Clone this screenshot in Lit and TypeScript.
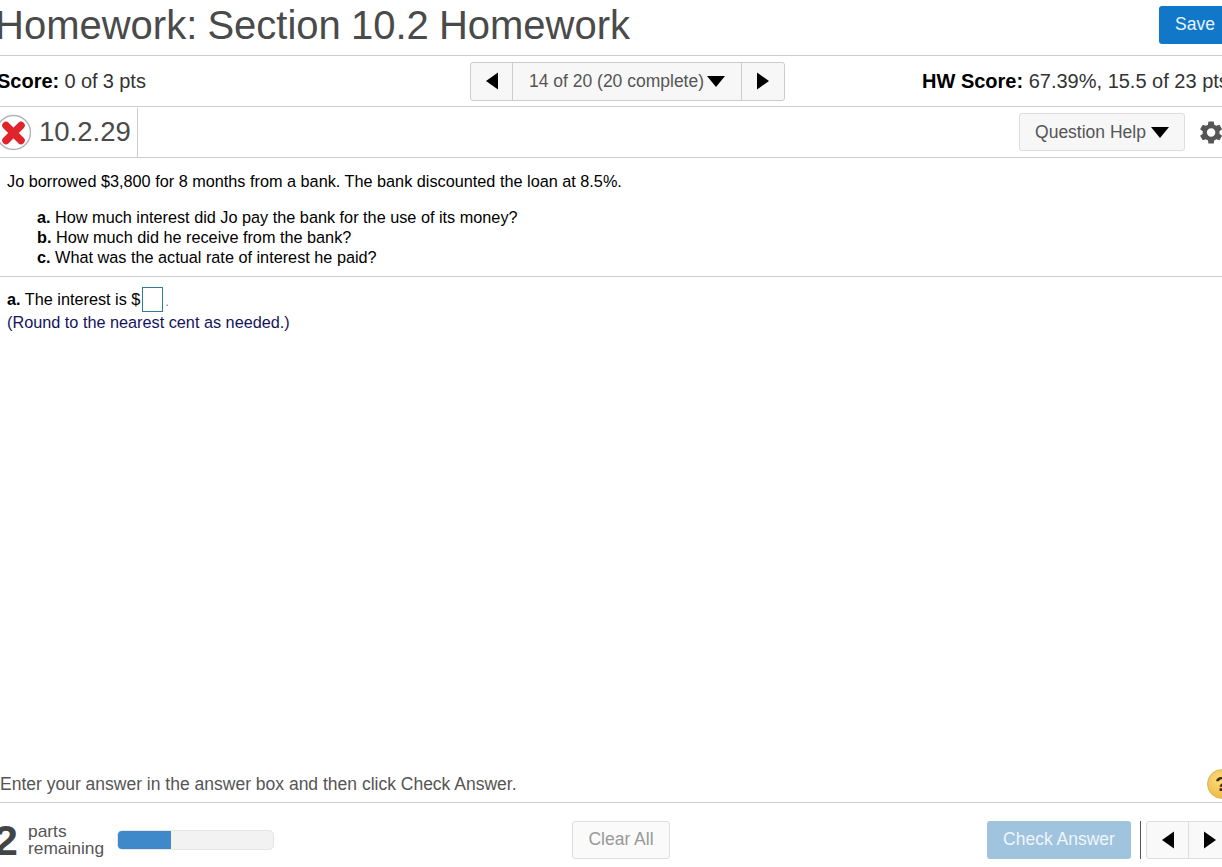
import { LitElement, html, css, svg } from "lit";
import { customElement } from "lit/decorators.js";

const left = svg`<svg width="14" height="18" viewBox="0 0 14 18"><path d="M13 .5v17L1 9z" fill="#000"/></svg>`;
const right = svg`<svg width="14" height="18" viewBox="0 0 14 18"><path d="M1 .5v17L13 9z" fill="#000"/></svg>`;
const down = svg`<svg width="18" height="11" viewBox="0 0 18 11"><path d="M0 0h18L9 11z" fill="#000"/></svg>`;

@customElement("app-root")
export class AppRoot extends LitElement {
  static styles = css`
    :host {
      display: flex;
      flex-direction: column;
      width: 1222px;
      height: 867px;
      overflow: hidden;
      background: #fff;
      font-family: "Liberation Sans", Arial, sans-serif;
      color: #000;
    }
    .title-row {
      height: 55px;
      flex: none;
      display: flex;
      justify-content: space-between;
      align-items: flex-start;
      border-bottom: 1px solid #ccc;
      box-sizing: content-box;
    }
    h1 {
      margin: 0 0 0 -5px;
      font-size: 40px;
      font-weight: 400;
      line-height: 50px;
      word-spacing: -1px;
      color: #4a4a4a;
      white-space: nowrap;
    }
    .save {
      width: 70px;
      height: 38px;
      margin: 6px -7px 0 0;
      box-sizing: border-box;
      background: #1177c8;
      border-radius: 3px;
      color: #e8f4fc;
      font-size: 17.5px;
      display: flex;
      align-items: center;
      padding: 0 0 2px 16px;
    }
    .score-row {
      height: 50px;
      flex: none;
      display: grid;
      grid-template-columns: 470px 315px 1fr;
      align-items: center;
      border-bottom: 1px solid #ccc;
      font-size: 20px;
      color: #333;
      white-space: nowrap;
    }
    .score-row b { color: #000; }
    .score { margin-left: -3px; word-spacing: -0.3px; }
    .hw { margin-left: 137px; }
    .nav {
      display: flex;
      height: 39px;
      box-sizing: border-box;
      border: 1px solid #ccc;
      border-radius: 3px;
      background: #f7f7f7;
      color: #555;
      font-size: 17.5px;
    }
    .nav > div { display: flex; align-items: center; justify-content: center; }
    .nav .arrow-l { width: 42px; border-right: 1px solid #ccc; box-sizing: border-box; }
    .nav .mid { width: 229px; gap: 3px; border-right: 1px solid #ccc; box-sizing: border-box; }
    .nav .arrow-r { flex: 1; }
    .q-row {
      height: 50px;
      flex: none;
      display: flex;
      align-items: center;
      border-bottom: 1px solid #ccc;
      box-sizing: content-box;
    }
    .q-left {
      display: flex;
      align-items: center;
      height: 49px;
      width: 137px;
      border-right: 1px solid #ccc;
      gap: 8px;
      font-size: 27.5px;
      color: #4a4a4a;
      flex: none;
    }
    .help {
      margin-left: auto;
      width: 166px;
      height: 38px;
      box-sizing: border-box;
      border: 1px solid #ddd;
      border-radius: 3px;
      background: #f7f7f7;
      color: #555;
      font-size: 17.5px;
      display: flex;
      align-items: center;
      justify-content: center;
      gap: 5px;
    }
    .gear { margin: 0 -3px 0 11px; flex: none; display: block; }
    .stem {
      padding: 13px 7px 9px;
      font-size: 16.25px;
      line-height: 20px;
      border-bottom: 1px solid #ccc;
      flex: none;
    }
    .stem p { margin: 0 0 16px; }
    .stem ul { list-style: none; margin: 0; padding: 0 0 0 30px; }
    .answer { padding: 11px 7px 0; font-size: 16.25px; line-height: 23px; flex: 1; }
    .line { display: flex; align-items: center; height: 23px; }
    .lead { white-space: pre; }
    .input {
      width: 21px;
      height: 25px;
      flex: none;
      box-sizing: border-box;
      border: 1px solid #2e7d95;
      margin: -1px 2px 0 2px;
    }
    .period { color: #666; font-size: 12px; padding-top: 5px; }
    .hint { color: #14145e; }
    .instr {
      height: 36px;
      flex: none;
      display: flex;
      justify-content: space-between;
      align-items: center;
      border-bottom: 1px solid #ccc;
      font-size: 17.5px;
      color: #555;
    }
    .help-dot {
      width: 30px;
      height: 30px;
      border-radius: 50%;
      margin-right: -15px;
      background: radial-gradient(circle at 40% 35%, #fbdc7c, #e9ae36);
      border: 1px solid #d9b25e;
      box-sizing: border-box;
      color: #3a2c10;
      font-weight: 700;
      font-size: 21px;
      padding-left: 7px;
      line-height: 28px;
    }
    .footer {
      height: 64px;
      flex: none;
      display: grid;
      grid-template-columns: 572px 415px 1fr;
      align-items: start;
      padding-top: 18px;
      box-sizing: border-box;
    }
    .parts { display: flex; align-items: center; height: 38px; }
    .num { font-size: 43px; font-weight: 700; color: #444; margin-left: -6px; width: 34px; line-height: 40px; }
    .lbl { font-size: 17.35px; line-height: 17px; color: #555; width: 90px; }
    .bar {
      width: 157px;
      height: 20px;
      box-sizing: border-box;
      border-radius: 5px;
      background: #f2f2f2;
      border: 1px solid #e4e4e4;
      overflow: hidden;
      margin-left: -1px;
    }
    .bar div { height: 100%; background: #3f88c9; }
    .clear {
      width: 98px;
      height: 38px;
      box-sizing: border-box;
      border: 1px solid #ddd;
      border-radius: 3px;
      background: #fafafa;
      color: #999;
      font-size: 17.5px;
      display: flex;
      align-items: center;
      justify-content: center;
      padding-bottom: 2px;
    }
    .actions { display: flex; align-items: center; white-space: nowrap; }
    .check {
      width: 144px;
      height: 38px;
      box-sizing: border-box;
      border-radius: 3px;
      background: #a0c3de;
      color: #eef6fb;
      font-size: 17.5px;
      display: flex;
      align-items: center;
      justify-content: center;
      flex: none;
      padding-bottom: 2px;
    }
    .sep { width: 1px; height: 38px; background: #555; margin: 0 5px 0 9px; flex: none; }
    .pager {
      display: flex;
      width: 90px;
      height: 38px;
      flex: none;
      box-sizing: border-box;
      border: 1px solid #ddd;
      border-radius: 3px;
      background: #f9f9f9;
    }
    .pager div { display: flex; align-items: center; justify-content: center; width: 42px; flex: none; box-sizing: border-box; }
    .pager div:first-child { border-right: 1px solid #ddd; }
  `;

  render() {
    return html`
      <div class="title-row">
        <h1>Homework: Section 10.2 Homework</h1>
        <div class="save">Save</div>
      </div>
      <div class="score-row">
        <div class="score"><b>Score:</b> 0 of 3 pts</div>
        <div class="nav">
          <div class="arrow-l">${left}</div>
          <div class="mid">14 of 20 (20 complete) ${down}</div>
          <div class="arrow-r">${right}</div>
        </div>
        <div class="hw"><b>HW Score:</b> 67.39%, 15.5 of 23 pts</div>
      </div>
      <div class="q-row">
        <div class="q-left">
          <svg width="31" height="37" viewBox="0 0 31 37" style="flex:none">
            <circle cx="13.5" cy="18.500" r="17" fill="#fff" stroke="#b5b5b5" stroke-width="1.5"/>
            <path d="M6 11.500 21 26.500M21 11.500 6 26.500" stroke="#e0242c" stroke-width="7.500" stroke-linecap="round"/>
          </svg>
          <span>10.2.29</span>
        </div>
        <div class="help">Question Help ${down}</div>
        <svg class="gear" width="29" height="29" viewBox="0 0 24 24"><path fill="#555" d="M19.400 13a7.500 7.500 0 0 0 0-2l2.200-1.700-2.200-3.800-2.600 1a7.500 7.500 0 0 0-1.700-1L14.700 2.800h-4.400l-.4 2.700a7.500 7.500 0 0 0-1.700 1l-2.600-1-2.200 3.800L5.600 11a7.500 7.500 0 0 0 0 2l-2.200 1.700 2.200 3.800 2.600-1a7.500 7.500 0 0 0 1.700 1l.4 2.700h4.400l.4-2.700a7.500 7.500 0 0 0 1.700-1l2.600 1 2.200-3.800zM12.500 15.500a3.500 3.500 0 1 1 0-7 3.500 3.500 0 0 1 0 7z"/></svg>
      </div>
      <div class="stem">
        <p>Jo borrowed $3,800 for 8 months from a bank. The bank discounted the loan at 8.5%.</p>
        <ul>
          <li><b>a.</b> How much interest did Jo pay the bank for the use of its money?</li>
          <li><b>b.</b> How much did he receive from the bank?</li>
          <li><b>c.</b> What was the actual rate of interest he paid?</li>
        </ul>
      </div>
      <div class="answer">
        <div class="line"><span class="lead"><b>a.</b> The interest is $</span><span class="input"></span><span class="period">.</span></div>
        <div class="hint">(Round to the nearest cent as needed.)</div>
      </div>
      <div class="instr">
        <span>Enter your answer in the answer box and then click Check Answer.</span>
        <div class="help-dot">?</div>
      </div>
      <div class="footer">
        <div class="parts">
          <div class="num">2</div>
          <div class="lbl">parts<br />remaining</div>
          <div class="bar"><div style="width:34%"></div></div>
        </div>
        <div><div class="clear">Clear All</div></div>
        <div class="actions">
          <div class="check">Check Answer</div>
          <div class="sep"></div>
          <div class="pager"><div>${left}</div><div>${right}</div></div>
        </div>
      </div>
    `;
  }
}
